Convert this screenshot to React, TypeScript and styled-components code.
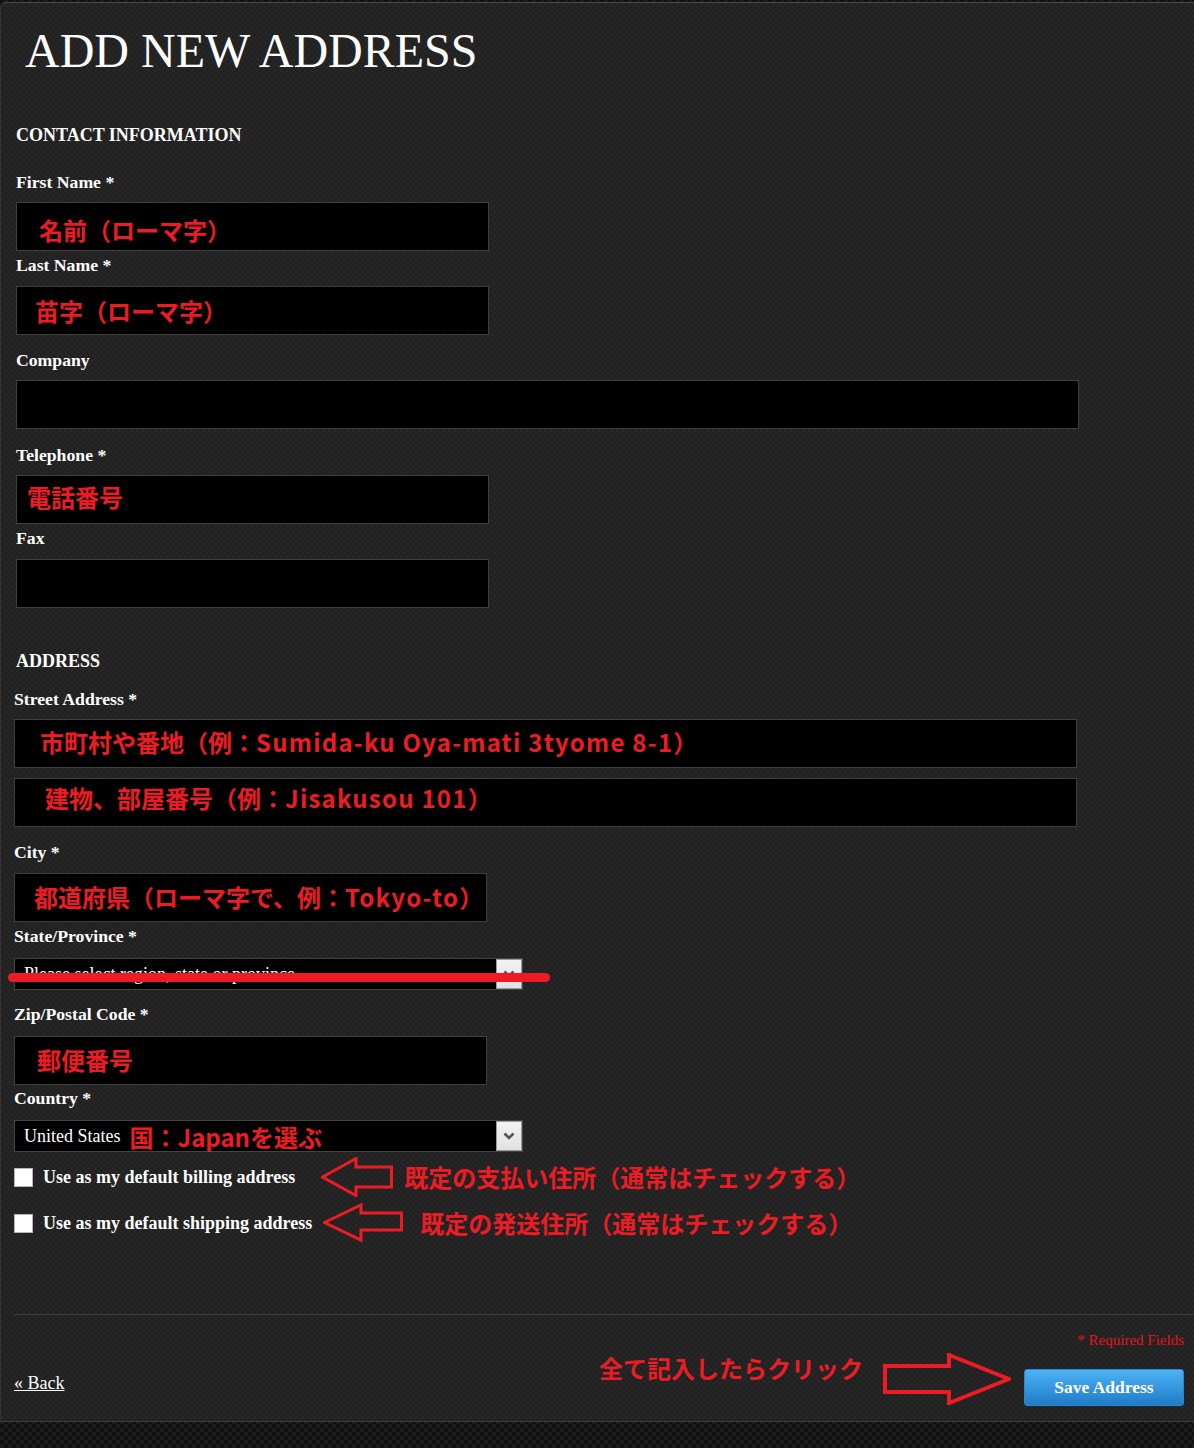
import styled, { createGlobalStyle } from "styled-components";

const GlobalStyle = createGlobalStyle`
  html, body {
    margin: 0;
    padding: 0;
  }

  body {
    background-color: #141414;
    background-image: repeating-conic-gradient(#1c1c1c 0 25%, #101010 0 50%);
    background-size: 8px 8px;
    font-family: "Liberation Serif", "Times New Roman", serif;
    color: #ffffff;
  }
`;

const RED = "#ed1c24";

const Page = styled.div`
  width: 1194px;
  padding-top: 2px;
`;

const Panel = styled.div`
  background-color: #232323;
  background-image: repeating-conic-gradient(#262626 0 25%, #212121 0 50%);
  background-size: 6px 6px;
  border-top: 1px solid #4a4a4a;
  border-left: 1px solid #333333;
  border-bottom: 1px solid #3c3c3c;
  border-top-left-radius: 6px;
`;

const Title = styled.h1`
  margin: 20px 0 0;
  padding-left: 24px;
  font: 400 48px/56px "Liberation Serif", serif;
  color: #ffffff;
`;

const Section = styled.section<{ $indent: number; $bottom: number }>`
  padding-left: ${(p) => p.$indent}px;
  padding-bottom: ${(p) => p.$bottom}px;
`;

const SectionHeading = styled.h2<{ $gap: number }>`
  margin: ${(p) => p.$gap}px 0 0;
  font: 700 18px/20px "Liberation Serif", serif;
  color: #ffffff;
`;

const Label = styled.label<{ $gap: number }>`
  display: block;
  margin-top: ${(p) => p.$gap}px;
  font: 700 17.7px/20px "Liberation Serif", serif;
  color: #ffffff;
`;

const InputBox = styled.div<{ $gap: number; $w: number; $px?: number; $py?: number }>`
  box-sizing: border-box;
  width: ${(p) => p.$w}px;
  height: 49px;
  margin-top: ${(p) => p.$gap}px;
  padding: ${(p) => p.$py ?? 0}px 0 0 ${(p) => p.$px ?? 0}px;
  background: #000000;
  border: 1px solid #3f3f3f;
  overflow: hidden;
`;

const Hint = styled.span<{ $size?: number }>`
  color: ${RED};
  font: 700 ${(p) => p.$size ?? 24}px / 24px "Noto Sans CJK JP", sans-serif;
  white-space: nowrap;
`;

// the latin words in the notes run wider than the CJK font's latin
const Latin = styled.span`
  letter-spacing: 1.25px;
`;

const SelectWrap = styled.div<{ $gap: number }>`
  position: relative;
  box-sizing: border-box;
  display: flex;
  width: 509px;
  height: 32px;
  margin-top: ${(p) => p.$gap}px;
  background: #000000;
  border: 1px solid #444444;
`;

const SelectValue = styled.div`
  flex: 1;
  display: flex;
  align-items: flex-start;
  gap: 9px;
  padding-left: 9px;
  white-space: nowrap;
  font: 400 18px/30px "Liberation Serif", serif;
  color: #ffffff;

  ${Hint} {
    margin-top: 4px;
  }
`;

const SelectArrow = styled.div`
  box-sizing: border-box;
  width: 26px;
  display: flex;
  align-items: center;
  justify-content: center;
  background: linear-gradient(#f3f3f3, #e2e2e2);
  border: 1px solid #9a9a9a;
`;

const Strike = styled.div`
  position: absolute;
  left: -7px;
  top: 14px;
  width: 542px;
  height: 9px;
  border-radius: 5px;
  background: ${RED};
`;

const CheckRow = styled.div<{ $gap: number }>`
  display: flex;
  align-items: center;
  height: 40px;
  margin-top: ${(p) => p.$gap}px;
`;

const CheckBox = styled.input.attrs({ type: "checkbox" })`
  appearance: none;
  box-sizing: border-box;
  margin: 0;
  width: 19px;
  height: 19px;
  background: #ffffff;
  border: 1px solid #b5b5b5;
`;

const CheckLabel = styled.span`
  margin-left: 10px;
  font: 700 18px/22px "Liberation Serif", serif;
  color: #ffffff;
`;

const ArrowSlot = styled.span<{ $gap: number }>`
  display: flex;
  margin-left: ${(p) => p.$gap}px;
`;

const Rule = styled.hr<{ $gap: number }>`
  margin: ${(p) => p.$gap}px 0 0;
  border: 0;
  height: 1px;
  background: #3c3c3c;
`;

const RequiredNote = styled.div`
  margin-top: 16px;
  padding-right: 10px;
  text-align: right;
  font: 400 15px/18px "Liberation Serif", serif;
  color: #e3131b;
`;

const ActionRow = styled.div`
  display: flex;
  justify-content: space-between;
  align-items: flex-start;
  margin-top: 4px;
  padding-right: 10px;
`;

const BackLink = styled.a`
  margin-top: 19px;
  font: 400 18px/22px "Liberation Serif", serif;
  color: #ffffff;
  text-decoration: underline;
`;

const RightGroup = styled.div`
  display: flex;
  align-items: flex-start;
`;

const ClickHint = styled.div`
  margin-top: 3px;
  margin-right: 20px;
`;

const SaveButton = styled.button`
  box-sizing: border-box;
  width: 160px;
  height: 37px;
  margin: 16px 0 0 13px;
  border: 1px solid #2a86cf;
  border-radius: 3px;
  background: linear-gradient(#4db2f8, #1f7cc6);
  font: 700 17.5px "Liberation Serif", serif;
  color: #ffffff;
  cursor: pointer;
`;

type ArrowProps = {
  w: number;
  h: number;
  neck: number;
  headTop: number;
  headBottom: number;
  shaftTop: number;
  shaftBottom: number;
  dir: "left" | "right";
  sw: number;
};

const HollowArrow = ({ w, h, neck, headTop, headBottom, shaftTop, shaftBottom, dir, sw }: ArrowProps) => {
  const i = sw / 2;
  const mid = (headTop + headBottom) / 2;
  const pts: [number, number][] = [
    [i, mid],
    [neck, headTop],
    [neck, shaftTop],
    [w - i, shaftTop],
    [w - i, shaftBottom],
    [neck, shaftBottom],
    [neck, headBottom],
  ];
  const flipped = dir === "right" ? pts.map(([x, y]) => [w - x, y]) : pts;
  return (
    <svg width={w} height={h} viewBox={`0 0 ${w} ${h}`}>
      <polygon
        points={flipped.map(([x, y]) => `${x},${y}`).join(" ")}
        fill="none"
        stroke={RED}
        strokeWidth={sw}
        strokeLinejoin="miter"
      />
    </svg>
  );
};

const Chevron = () => (
  <svg width="12" height="8" viewBox="0 0 12 8">
    <path d="M1.5 1.5 L6 6 L10.5 1.5" fill="none" stroke="#555" strokeWidth="2.6" />
  </svg>
);

const App = () => {
  return (
    <Page>
      <GlobalStyle />
      <Panel>
        <Title>ADD NEW ADDRESS</Title>
        <Section $indent={15} $bottom={13}>
          <SectionHeading $gap={46}>CONTACT INFORMATION</SectionHeading>
          <Label $gap={27}>First Name *</Label>
          <InputBox $gap={10} $w={473} $px={22} $py={15}>
            <Hint>名前（ローマ字）</Hint>
          </InputBox>
          <Label $gap={4}>Last Name *</Label>
          <InputBox $gap={11} $w={473} $px={18} $py={12}>
            <Hint>苗字（ローマ字）</Hint>
          </InputBox>
          <Label $gap={15}>Company</Label>
          <InputBox $gap={10} $w={1063} />
          <Label $gap={16}>Telephone *</Label>
          <InputBox $gap={10} $w={473} $px={10} $py={9}>
            <Hint>電話番号</Hint>
          </InputBox>
          <Label $gap={4}>Fax</Label>
          <InputBox $gap={11} $w={473} />
          <SectionHeading $gap={43}>ADDRESS</SectionHeading>
        </Section>
        <Section $indent={13} $bottom={15}>
          <Label $gap={5}>Street Address *</Label>
          <InputBox $gap={10} $w={1063} $px={25} $py={10}>
            <Hint>
              市町村や番地（例：<Latin>Sumida-ku Oya-mati 3tyome 8-1</Latin>）
            </Hint>
          </InputBox>
          <InputBox $gap={10} $w={1063} $px={30} $py={7}>
            <Hint>
              建物、部屋番号（例：<Latin>Jisakusou 101</Latin>）
            </Hint>
          </InputBox>
          <Label $gap={15}>City *</Label>
          <InputBox $gap={11} $w={473} $px={19} $py={11}>
            <Hint>
              都道府県（ローマ字で、例：<Latin>Tokyo-to</Latin>）
            </Hint>
          </InputBox>
          <Label $gap={4}>State/Province *</Label>
          <SelectWrap $gap={12}>
            <SelectValue>Please select region, state or province</SelectValue>
            <SelectArrow>
              <Chevron />
            </SelectArrow>
            <Strike />
          </SelectWrap>
          <Label $gap={14}>Zip/Postal Code *</Label>
          <InputBox $gap={12} $w={473} $px={22} $py={11}>
            <Hint>郵便番号</Hint>
          </InputBox>
          <Label $gap={3}>Country *</Label>
          <SelectWrap $gap={12}>
            <SelectValue>
              United States
              <Hint>国：Japanを選ぶ</Hint>
            </SelectValue>
            <SelectArrow>
              <Chevron />
            </SelectArrow>
          </SelectWrap>
          <CheckRow $gap={5}>
            <CheckBox />
            <CheckLabel>Use as my default billing address</CheckLabel>
            <ArrowSlot $gap={26}>
              <HollowArrow w={72} h={40} neck={35} headTop={1.5} headBottom={38.5} shaftTop={10} shaftBottom={30} dir="left" sw={3} />
            </ArrowSlot>
            <ArrowSlot $gap={11}>
              <Hint>既定の支払い住所（通常はチェックする）</Hint>
            </ArrowSlot>
          </CheckRow>
          <CheckRow $gap={6}>
            <CheckBox />
            <CheckLabel>Use as my default shipping address</CheckLabel>
            <ArrowSlot $gap={11}>
              <HollowArrow w={80} h={40} neck={38} headTop={2} headBottom={37} shaftTop={10} shaftBottom={27} dir="left" sw={3} />
            </ArrowSlot>
            <ArrowSlot $gap={17}>
              <Hint>既定の発送住所（通常はチェックする）</Hint>
            </ArrowSlot>
          </CheckRow>
          <Rule $gap={71} />
          <RequiredNote>* Required Fields</RequiredNote>
          <ActionRow>
            <BackLink href="#">« Back</BackLink>
            <RightGroup>
              <ClickHint>
                <Hint>全て記入したらクリック</Hint>
              </ClickHint>
              <HollowArrow w={128} h={52} neck={62} headTop={2} headBottom={50} shaftTop={13} shaftBottom={39} dir="right" sw={4} />
              <SaveButton>Save Address</SaveButton>
            </RightGroup>
          </ActionRow>
        </Section>
      </Panel>
    </Page>
  );
};

export default App;
